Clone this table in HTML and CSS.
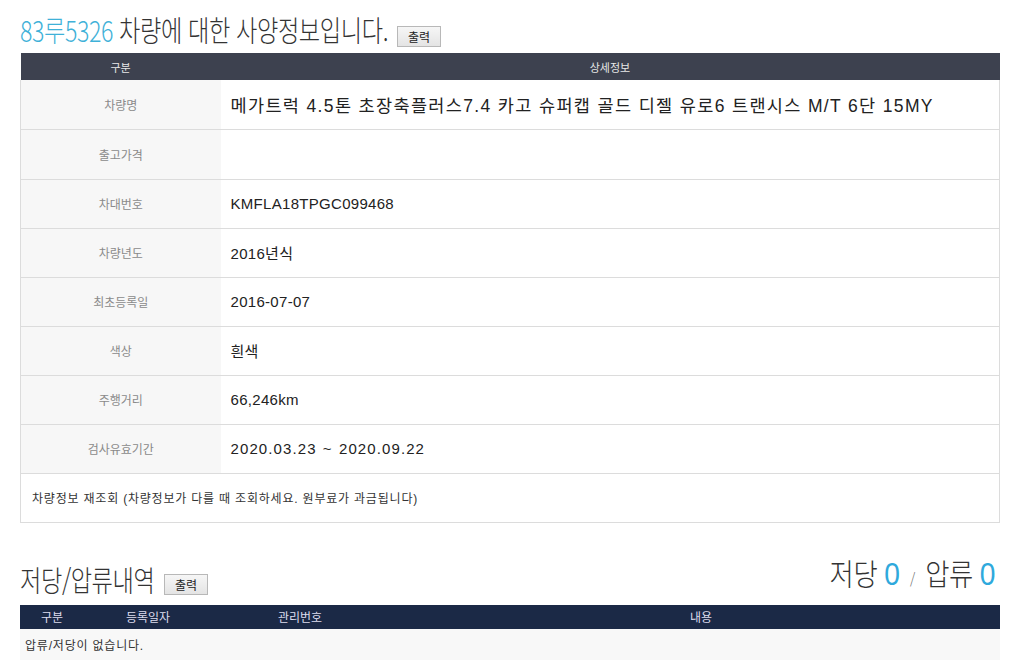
FILE: index.html
```html
<!DOCTYPE html>
<html lang="ko">
<head>
<meta charset="utf-8">
<link rel="stylesheet" href="styles.css">
</head>
<body>
<div class="page">
  <div class="title-row">
    <h1 class="title"><span class="title-in"><span class="plate">83루5326</span> 차량에 대한 사양정보입니다.</span></h1>
    <button class="btn">출력</button>
  </div>
  <table class="spec">
    <thead>
      <tr><th class="c1">구분</th><th>상세정보</th></tr>
    </thead>
    <tbody>
      <tr><td class="lbl">차량명</td><td class="val big">메가트럭 4.5톤 초장축플러스7.4 카고 슈퍼캡 골드 디젤 유로6 트랜시스 M/T 6단 15MY</td></tr>
      <tr class="tall"><td class="lbl">출고가격</td><td class="val"></td></tr>
      <tr><td class="lbl">차대번호</td><td class="val">KMFLA18TPGC099468</td></tr>
      <tr><td class="lbl">차량년도</td><td class="val">2016년식</td></tr>
      <tr><td class="lbl">최초등록일</td><td class="val">2016-07-07</td></tr>
      <tr><td class="lbl">색상</td><td class="val">흰색</td></tr>
      <tr><td class="lbl">주행거리</td><td class="val">66,246km</td></tr>
      <tr><td class="lbl">검사유효기간</td><td class="val wide">2020.03.23 ~ 2020.09.22</td></tr>
      <tr><td class="note" colspan="2">차량정보 재조회 (차량정보가 다를 때 조회하세요. 원부료가 과금됩니다)</td></tr>
    </tbody>
  </table>

  <div class="sec-row">
    <div class="sec-left">
      <h2 class="sec-title"><span class="sec-in">저당/압류내역</span></h2>
      <button class="btn">출력</button>
    </div>
    <div class="counts"><span class="counts-in">저당 <span class="num">0</span> <span class="slash">/</span> 압류 <span class="num">0</span></span></div>
  </div>
  <table class="lien">
    <thead>
      <tr><th class="l1">구분</th><th class="l2">등록일자</th><th class="l3">관리번호</th><th>내용</th></tr>
    </thead>
    <tbody>
      <tr><td class="empty" colspan="4">압류/저당이 없습니다.</td></tr>
    </tbody>
  </table>
</div>
</body>
</html>
```
FILE: styles.css
```css
* { box-sizing: border-box; }
html, body { margin: 0; padding: 0; background: #fff; }
body {
  font-family: "Noto Sans CJK KR", "Noto Sans", sans-serif;
  color: #333;
}
.page { padding: 10px 14px 0 20px; width: 1014px; }

.title-row { display: flex; align-items: flex-end; height: 43px; padding-bottom: 7px; }
.title {
  margin: 0;
  width: 377px;
  white-space: nowrap;
  font-size: 29px;
  font-weight: 300;
  color: #333;
  line-height: 34px;
}
.title-in {
  display: inline-block;
  transform: scaleX(0.8);
  transform-origin: left center;
  letter-spacing: -0.5px;
}
.plate { color: #3fb1d8; }
.btn {
  width: 44px;
  height: 21px;
  padding: 0;
  border: 1px solid #b8b8b8;
  background: linear-gradient(#f6f6f6, #e4e4e4);
  font-family: "Noto Sans CJK KR", sans-serif;
  font-size: 12px;
  color: #222;
  line-height: 19px;
}
.title-row .btn { margin-bottom: -1px; }

table { border-collapse: collapse; width: 980px; }
.spec th {
  background: #3d414f;
  color: #e8e8e8;
  font-weight: 400;
  font-size: 11px;
  height: 27px;
  padding: 0;
}
.spec th.c1 { width: 200px; }
.spec td { border-bottom: 1px solid #dcdcdc; height: 49px; padding: 0; }
.spec tr.tall td { height: 50px; }
.spec tbody tr td:first-child { border-left: 1px solid #dcdcdc; }
.spec tbody tr td:last-child { border-right: 1px solid #dcdcdc; }
.lbl {
  background: #f7f7f7;
  color: #8a8a8a;
  font-size: 12px;
  text-align: center;
}
.val {
  padding-left: 10px !important;
  font-family: "Liberation Sans", "Noto Sans CJK KR", sans-serif;
  font-size: 15px;
  letter-spacing: 0.3px;
  color: #222;
}
.val.wide { letter-spacing: 1.1px; word-spacing: 1px; }
.val.big { font-size: 17.5px; letter-spacing: 1.35px; }
.note {
  padding-left: 11px !important;
  font-family: "Liberation Sans", "Noto Sans CJK KR", sans-serif;
  font-size: 12px;
  letter-spacing: 0.8px;
  color: #333;
}

.sec-row {
  display: flex;
  justify-content: space-between;
  align-items: flex-end;
  margin-top: 36px;
  height: 46px;
  padding-bottom: 10px;
}
.sec-left { display: flex; align-items: flex-end; }
.sec-title {
  margin: 0;
  width: 144px;
  white-space: nowrap;
  font-size: 29px;
  font-weight: 300;
  line-height: 32px;
  color: #333;
}
.sec-in, .counts-in {
  display: inline-block;
  transform: scaleX(0.8);
  transform-origin: left center;
  letter-spacing: -0.5px;
}
.counts {
  width: 240px;
  white-space: nowrap;
  text-align: right;
  font-size: 30px;
  font-weight: 300;
  color: #333;
  line-height: 32px;
  margin-right: 5px;
}
.counts-in { transform-origin: right center; transform: scaleX(0.88); }
.num { color: #2fa9dc; font-size: 32px; font-family: "Liberation Sans", sans-serif; }
.slash { font-size: 15px; color: #666; margin: 0 4px; }

.lien th {
  background: #1b2946;
  color: #dde;
  font-weight: 400;
  font-size: 12px;
  height: 24px;
  padding: 0;
}
.lien th.l1 { width: 64px; }
.lien th.l2 { width: 128px; }
.lien th.l3 { width: 190px; padding-right: 14px; }
.empty {
  background: #f8f8f8;
  height: 32px;
  padding: 0 0 0 5px;
  font-family: "Liberation Sans", "Noto Sans CJK KR", sans-serif;
  font-size: 12px;
  letter-spacing: 0.8px;
  color: #333;
}
```
